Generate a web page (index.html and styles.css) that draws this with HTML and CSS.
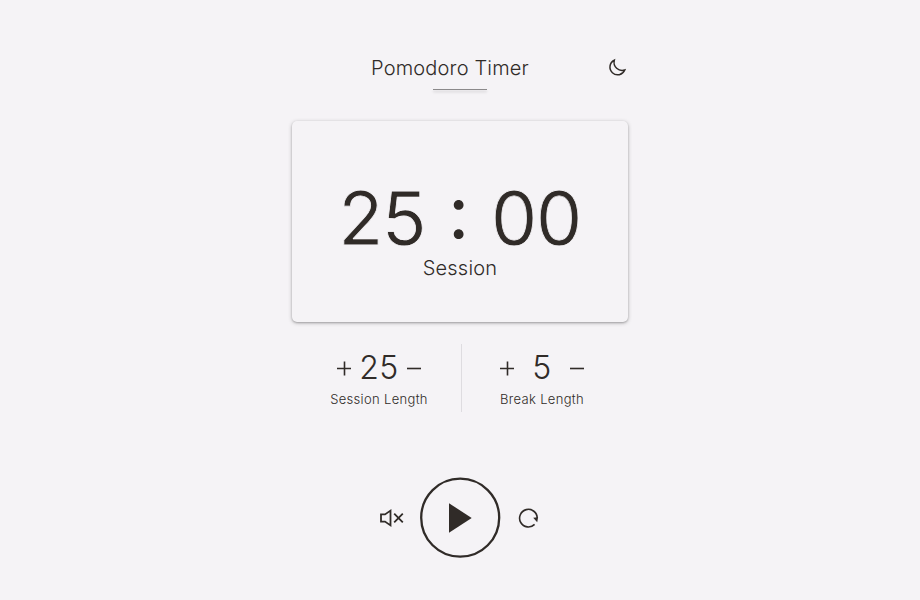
FILE: index.html
```html
<!DOCTYPE html>
<html lang="en">
<head>
<meta charset="utf-8">
<title>Pomodoro Timer</title>
<link rel="stylesheet" href="styles.css">
</head>
<body>
<main class="app">
  <header class="header">
    <h1 class="title">Pomodoro Timer</h1>
    <svg class="moon" viewBox="0 0 20 20"><path d="M7.3 2.2A7.7 7.7 0 1 0 17.8 12A8.2 8.2 0 0 1 7.3 2.2Z"/></svg>
  </header>
  <div class="rule"></div>
  <section class="card">
    <div class="time"><span class="minutes">25</span><span class="colon">:</span><span class="seconds">00</span></div>
    <div class="mode">Session</div>
  </section>
  <section class="lengths">
    <div class="length">
      <div class="stepper">
        <svg class="sign" viewBox="0 0 16 16"><path d="M1 8.5H15M8.5 1.5V15.5"/></svg>
        <span class="value">25</span>
        <svg class="sign" viewBox="0 0 16 16"><path d="M1 8.5H15"/></svg>
      </div>
      <div class="label">Session Length</div>
    </div>
    <div class="length length-break">
      <div class="stepper">
        <svg class="sign" viewBox="0 0 16 16"><path d="M1 8.5H15M8.5 1.5V15.5"/></svg>
        <span class="value">5</span>
        <svg class="sign" viewBox="0 0 16 16"><path d="M1 8.5H15"/></svg>
      </div>
      <div class="label">Break Length</div>
    </div>
  </section>
  <section class="controls">
    <svg class="mute" viewBox="0 0 26 20"><path d="M2 6.4H6L11.5 2.6V17.4L6 13.6H2ZM15.2 5.7L23.8 14.3M23.8 5.7L15.2 14.3"/></svg>
    <svg class="play" viewBox="0 0 80 80"><circle cx="40.2" cy="39.7" r="39"/><path d="M29 25.2L51.7 40L29 54.8Z"/></svg>
    <svg class="reset" viewBox="0 0 22 22"><path class="arc" d="M16.6 17.4A8.8 8.8 0 1 1 19.2 11.3"/><path class="tip" d="M15.2 10.8L20.1 10.2L19.2 15.2Z"/></svg>
  </section>
</main>
</body>
</html>
```

FILE: styles.css
```css
* { box-sizing: border-box; }
body {
  margin: 0;
  background: #f5f3f6;
  color: #302b28;
  font-family: Inter, "Liberation Sans", sans-serif;
  font-weight: 300;
}
svg { display: block; flex: none; fill: none; stroke: #302b28; stroke-width: 1.6; }
.app { width: 336px; margin: 0 auto; padding-top: 56px; }
.header { display: flex; align-items: center; height: 24px; padding-left: 79px; }
.title { margin: 0; font-size: 20px; font-weight: 300; line-height: 25px; letter-spacing: 0.18px; white-space: nowrap; }
.moon { width: 20px; height: 20px; margin-left: auto; margin-right: 1px; stroke-width: 1.5; }
.rule { width: 54px; height: 1px; margin: 9px auto 31px; background: #8b898b; box-shadow: 0 2px 3px rgba(0, 0, 0, 0.2); }
.card {
  height: 201px;
  padding-top: 52px;
  border-radius: 5px;
  text-align: center;
  box-shadow: 0 1px 4px rgba(0, 0, 0, 0.24), 0 1px 2px rgba(0, 0, 0, 0.2);
}
.time { display: flex; justify-content: center; height: 83px; padding-right: 1px; font-size: 74px; font-weight: 400; line-height: 91px; letter-spacing: -1.8px; -webkit-text-stroke: 0.8px #f5f3f6; }
.colon { width: 66px; line-height: 78px; -webkit-text-stroke: 0; }
.mode { font-size: 20px; line-height: 25px; letter-spacing: 0.2px; }
.lengths { display: flex; height: 68px; margin-top: 22px; }
.length { width: 169px; padding: 6px 0 0 5px; text-align: center; }
.length-break { width: 167px; padding: 6px 6px 0 0; border-left: 1px solid #dedce0; }
.stepper { display: flex; justify-content: center; align-items: center; height: 36px; }
.sign { width: 16px; height: 16px; }
.value { width: 54px; font-size: 32px; line-height: 38px; letter-spacing: 0.5px; }
.label { margin-top: 5px; font-size: 13px; line-height: 16px; letter-spacing: 0.33px; white-space: nowrap; }
.controls { display: flex; align-items: center; height: 80px; margin-top: 66px; padding-left: 87px; }
.mute { width: 26px; height: 20px; margin-right: 15px; stroke-width: 1.8; }
.play { width: 80px; height: 80px; margin-right: 18px; stroke-width: 2.3; overflow: visible; }
.play path, .tip { fill: #302b28; stroke: none; }
.reset { width: 22px; height: 22px; }
```
